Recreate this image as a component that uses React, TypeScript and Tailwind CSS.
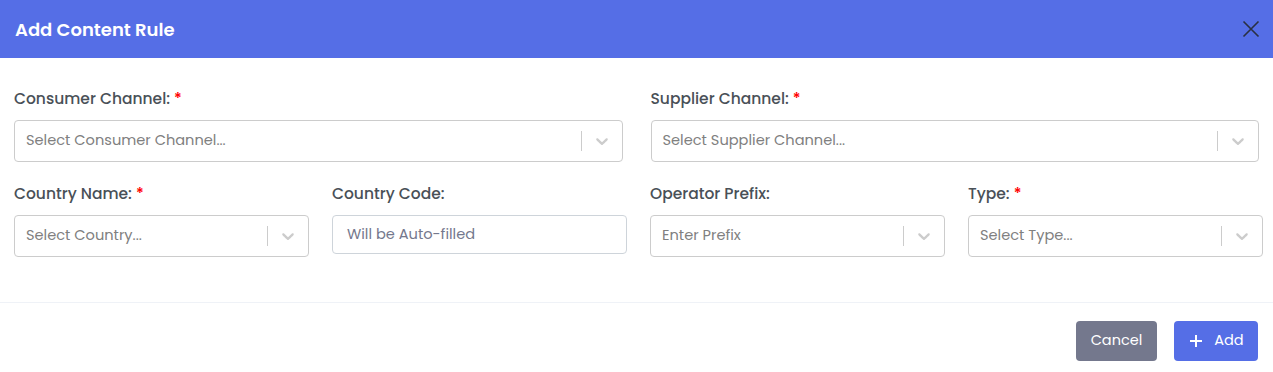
import React from "react";

const font = { fontFamily: "Poppins, 'Open Sans', 'Noto Sans', sans-serif" };

function Chevron() {
  return (
    <svg width="20" height="20" viewBox="0 0 20 20" className="text-[#cccccc]" fill="currentColor">
      <path d="M4.516 7.548c0.436-0.446 1.043-0.481 1.576 0l3.908 3.747 3.908-3.747c0.533-0.481 1.141-0.446 1.574 0 0.436 0.445 0.408 1.197 0 1.615-0.406 0.418-4.695 4.502-4.695 4.502-0.217 0.223-0.502 0.335-0.787 0.335s-0.57-0.112-0.789-0.335c0 0-4.287-4.084-4.695-4.502s-0.436-1.17 0-1.615z" />
    </svg>
  );
}

function Select({ placeholder, h = "h-[42px]" }: { placeholder: string; h?: string }) {
  return (
    <div className={`flex items-center ${h} rounded-[4px] border border-[#cccccc] bg-white`}>
      <div className="flex-1 pl-[11px] text-[14.6px] text-[#808080] truncate">{placeholder}</div>
      <div className="flex items-center self-stretch">
        <span className="w-px h-[20px] bg-[#cccccc] my-auto" />
        <div className="px-[10px] flex items-center">
          <Chevron />
        </div>
      </div>
    </div>
  );
}

function Label({ text, required }: { text: string; required?: boolean }) {
  return (
    <div className="text-[15.5px] font-medium text-[#495057] mb-[10px] leading-[22px]">
      {text}
      {required && <span className="text-[#f00] ml-[4px]">*</span>}
    </div>
  );
}

export default function App() {
  return (
    <div className="w-[1273px] h-[372px] bg-white" style={font}>
      <div className="h-[58px] bg-[#556ee6] flex items-center justify-between pl-[15px] pr-[12px]">
        <div className="text-white text-[18px] font-semibold">Add Content Rule</div>
        <svg width="20" height="20" viewBox="0 0 16 16" className="text-[#2a3042]">
          <path d="M2 2 L14 14 M14 2 L2 14" stroke="currentColor" strokeWidth="1.3" />
        </svg>
      </div>
      <div className="px-[14px] pt-[30px] pb-[45px] border-b border-[#eff2f7]">
        <div className="grid grid-cols-2 gap-x-[28px] w-[1245px]">
          <div>
            <Label text="Consumer Channel:" required />
            <Select placeholder="Select Consumer Channel..." />
          </div>
          <div>
            <Label text="Supplier Channel:" required />
            <Select placeholder="Select Supplier Channel..." />
          </div>
        </div>
        <div className="grid grid-cols-4 gap-x-[23px] mt-[21px] w-[1249px]">
          <div>
            <Label text="Country Name:" required />
            <Select placeholder="Select Country..." />
          </div>
          <div>
            <Label text="Country Code:" />
            <div className="h-[39px] flex items-center rounded-[4px] border border-[#ced4da] pl-[14px] text-[14.6px] text-[#74788d]">
              Will be Auto-filled
            </div>
          </div>
          <div>
            <Label text="Operator Prefix:" />
            <Select placeholder="Enter Prefix" />
          </div>
          <div>
            <Label text="Type:" required />
            <Select placeholder="Select Type..." />
          </div>
        </div>
      </div>
      <div className="flex justify-end gap-[17px] pr-[15px] pt-[18px]">
        <button className="h-[40px] w-[81px] rounded-[4px] bg-[#74788d] text-white text-[14.5px]">Cancel</button>
        <button className="h-[40px] w-[84px] rounded-[4px] bg-[#556ee6] text-white text-[14.5px] flex items-center justify-center gap-[10px]">
          <svg width="16" height="16" viewBox="0 0 16 16">
            <path d="M8 2 V14 M2 8 H14" stroke="white" strokeWidth="2" />
          </svg>
          Add
        </button>
      </div>
    </div>
  );
}
